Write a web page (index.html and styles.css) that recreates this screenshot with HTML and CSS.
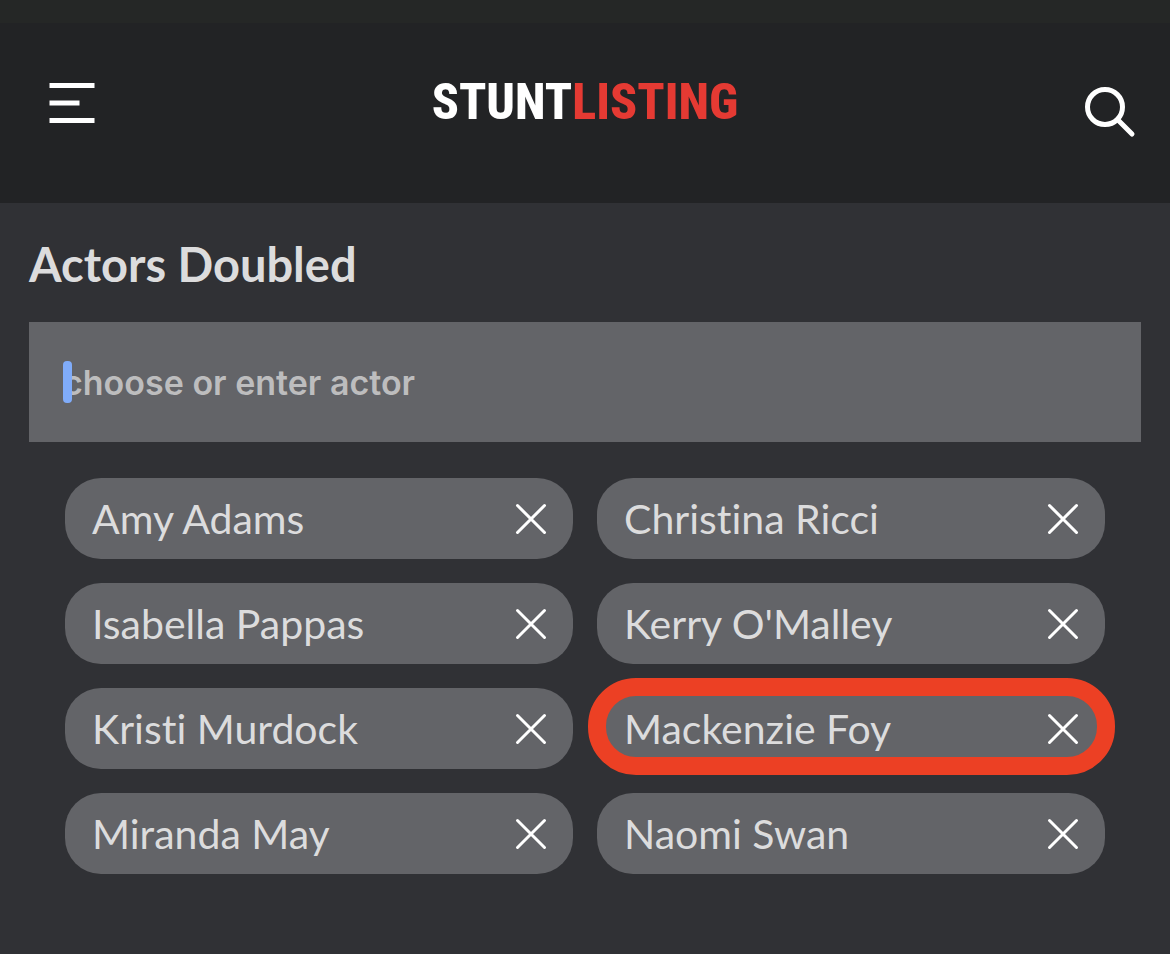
FILE: index.html
```
<!DOCTYPE html>
<html lang="en">
<head>
    <meta charset="UTF-8">
    <meta name="viewport" content="width=device-width, initial-scale=1.0">
    <title>StuntListing</title>
    <link rel="stylesheet" href="styles.css">
</head>
<body>
    <svg class="symbols" aria-hidden="true">
        <symbol id="close" viewBox="0 0 32 32">
            <path d="M2.5 2.5 29.5 29.5M29.5 2.5 2.5 29.5" fill="none" stroke="#fff" stroke-width="3" stroke-linecap="round"/>
        </symbol>
    </svg>

    <header class="header">
        <button class="icon-btn" type="button" aria-label="Menu">
            <svg class="menu-icon" width="46" height="40" viewBox="0 0 46 40">
                <path d="M0.5 2.5H45.5M0.5 20H30.5M0.5 37.5H45.5" stroke="#fff" stroke-width="5"/>
            </svg>
        </button>
        <a class="logo" href="#"><span>STUNT</span><span class="logo-red">LISTING</span></a>
        <button class="icon-btn" type="button" aria-label="Search">
            <svg class="search-icon" width="52" height="52" viewBox="0 0 52 52">
                <circle cx="21" cy="21" r="17.5" fill="none" stroke="#fff" stroke-width="5"/>
                <path d="M34 34 48 48" stroke="#fff" stroke-width="5" stroke-linecap="round"/>
            </svg>
        </button>
    </header>

    <main class="content">
        <h1><label for="actor">Actors Doubled</label></h1>
        <div class="field">
            <input type="text" id="actor" placeholder="choose or enter actor">
            <span class="caret"></span>
        </div>
        <ul class="chips">
            <li class="chip">Amy Adams
                <button type="button" aria-label="Remove Amy Adams"><svg><use href="#close"/></svg></button></li>
            <li class="chip">Christina Ricci
                <button type="button" aria-label="Remove Christina Ricci"><svg><use href="#close"/></svg></button></li>
            <li class="chip">Isabella Pappas
                <button type="button" aria-label="Remove Isabella Pappas"><svg><use href="#close"/></svg></button></li>
            <li class="chip">Kerry O'Malley
                <button type="button" aria-label="Remove Kerry O'Malley"><svg><use href="#close"/></svg></button></li>
            <li class="chip">Kristi Murdock
                <button type="button" aria-label="Remove Kristi Murdock"><svg><use href="#close"/></svg></button></li>
            <li class="chip chip-marked">Mackenzie Foy
                <button type="button" aria-label="Remove Mackenzie Foy"><svg><use href="#close"/></svg></button></li>
            <li class="chip">Miranda May
                <button type="button" aria-label="Remove Miranda May"><svg><use href="#close"/></svg></button></li>
            <li class="chip">Naomi Swan
                <button type="button" aria-label="Remove Naomi Swan"><svg><use href="#close"/></svg></button></li>
        </ul>
    </main>
</body>
</html>
```
FILE: styles.css
```
* {
    box-sizing: border-box;
}
body {
    margin: 0;
    background-color: #303135;
    color: #dcdcdd;
    font-family: Lato, sans-serif;
    font-variant-ligatures: none;
}
button {
    padding: 0;
    border: none;
    background: none;
    cursor: pointer;
}
svg {
    display: block;
}
.symbols {
    display: none;
}
.header {
    display: grid;
    grid-template-columns: 1fr auto 1fr;
    align-items: start;
    padding: 34px 34px 50px 49px;
    border-top: 23px solid #252726;
    background-color: #222325;
}
.icon-btn {
    justify-self: start;
    padding-top: 26px;
}
.icon-btn:last-child {
    justify-self: end;
    padding-top: 29px;
}
.logo {
    height: 96px;
    padding-right: 15px;
    color: #fff;
    font-family: "Roboto Condensed", "Liberation Sans Narrow", "Liberation Sans", sans-serif;
    font-size: 50px;
    font-weight: 800;
    line-height: 90px;
    text-decoration: none;
}
.logo-red {
    color: #e53a33;
}
.content {
    padding: 32px 29px;
}
h1 {
    margin: 0 0 29px;
    font-size: 47px;
    font-weight: bold;
    line-height: 58px;
}
.field {
    position: relative;
}
.field input {
    display: block;
    width: 100%;
    height: 120px;
    padding: 0 34px;
    border: none;
    border-radius: 0;
    outline: none;
    background-color: #636468;
    color: #dcdcdd;
    font-family: Inter, sans-serif;
    font-size: 34px;
    font-weight: 600;
}
.field input::placeholder {
    color: #bdbdbe;
    opacity: 1;
}
.caret {
    position: absolute;
    top: 39px;
    left: 34px;
    width: 9px;
    height: 42px;
    border-radius: 4px;
    background-color: #80acfa;
}
.chips {
    display: grid;
    grid-template-columns: 1fr 1fr;
    gap: 24px;
    margin: 36px 0 0;
    padding: 0 36px;
    list-style: none;
}
.chip {
    position: relative;
    display: flex;
    align-items: center;
    justify-content: space-between;
    height: 81px;
    padding: 0 26px 0 27px;
    border-radius: 36px;
    background-color: #636468;
    font-size: 41px;
}
.chip svg {
    width: 32px;
    height: 32px;
}
/* ring around the marked actor */
.chip-marked::after {
    content: "";
    position: absolute;
    inset: -10px -10px -6px -9px;
    border: 18px solid #ec4024;
    border-radius: 48px;
    pointer-events: none;
}
```
